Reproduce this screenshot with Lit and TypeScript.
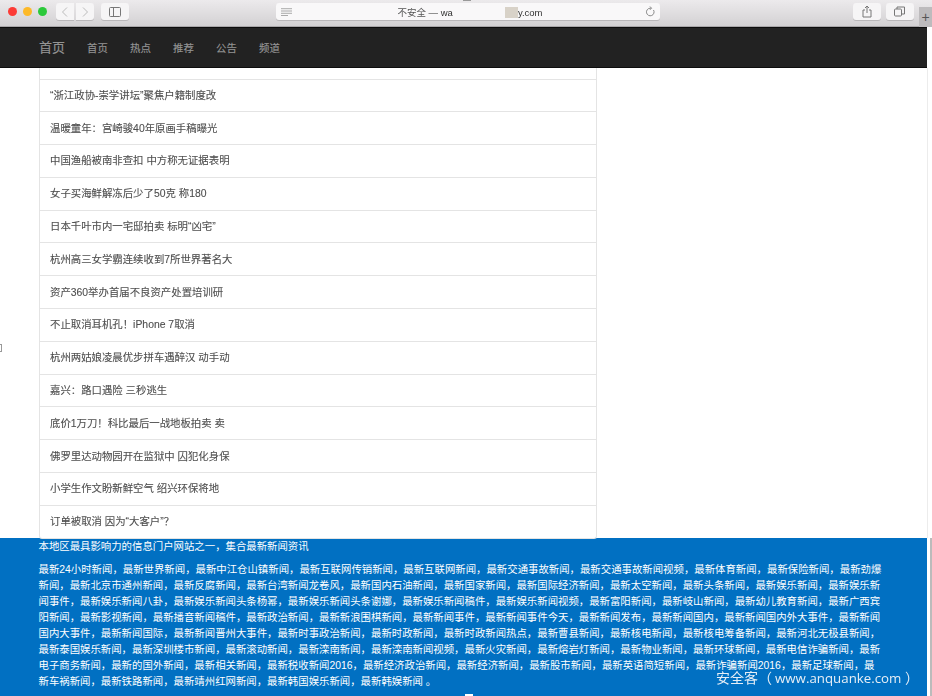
import { LitElement, html, css, svg } from "lit";
import { customElement } from "lit/decorators.js";

const NEWS = [
  "“浙江政协-崇学讲坛”聚焦户籍制度改",
  "温暖童年：宫崎骏40年原画手稿曝光",
  "中国渔船被南非查扣 中方称无证据表明",
  "女子买海鲜解冻后少了50克 称180",
  "日本千叶市内一宅邸拍卖 标明“凶宅”",
  "杭州高三女学霸连续收到7所世界著名大",
  "资产360举办首届不良资产处置培训研",
  "不止取消耳机孔！iPhone 7取消",
  "杭州两姑娘凌晨优步拼车遇醉汉 动手动",
  "嘉兴：路口遇险 三秒逃生",
  "底价1万刀！科比最后一战地板拍卖 卖",
  "佛罗里达动物园开在监狱中 囚犯化身保",
  "小学生作文盼新鲜空气 绍兴环保将地",
  "订单被取消 因为“大客户”？",
];
const NAV = ["首页", "热点", "推荐", "公告", "频道"];
const LINES = [
  "最新24小时新闻，最新世界新闻，最新中江仓山镇新闻，最新互联网传销新闻，最新互联网新闻，最新交通事故新闻，最新交通事故新闻视频，最新体育新闻，最新保险新闻，最新劲爆",
  "新闻，最新北京市通州新闻，最新反腐新闻，最新台湾新闻龙卷风，最新国内石油新闻，最新国家新闻，最新国际经济新闻，最新太空新闻，最新头条新闻，最新娱乐新闻，最新娱乐新",
  "闻事件，最新娱乐新闻八卦，最新娱乐新闻头条杨幂，最新娱乐新闻头条谢娜，最新娱乐新闻稿件，最新娱乐新闻视频，最新富阳新闻，最新岐山新闻，最新幼儿教育新闻，最新广西宾",
  "阳新闻，最新影视新闻，最新播音新闻稿件，最新政治新闻，最新新浪围棋新闻，最新新闻事件，最新新闻事件今天，最新新闻发布，最新新闻国内，最新新闻国内外大事件，最新新闻",
  "国内大事件，最新新闻国际，最新新闻晋州大事件，最新时事政治新闻，最新时政新闻，最新时政新闻热点，最新曹县新闻，最新核电新闻，最新核电筹备新闻，最新河北无极县新闻，",
  "最新泰国娱乐新闻，最新深圳楼市新闻，最新滚动新闻，最新滦南新闻，最新滦南新闻视频，最新火灾新闻，最新熔岩灯新闻，最新物业新闻，最新环球新闻，最新电信诈骗新闻，最新",
  "电子商务新闻，最新的国外新闻，最新相关新闻，最新税收新闻2016，最新经济政治新闻，最新经济新闻，最新股市新闻，最新英语简短新闻，最新诈骗新闻2016，最新足球新闻，最",
  "新车祸新闻，最新铁路新闻，最新靖州红网新闻，最新韩国娱乐新闻，最新韩娱新闻 。",
];

const icon = (w: number, h: number, body: unknown) =>
  html`<svg width=${w} height=${h} viewBox="0 0 ${w} ${h}" fill="none" stroke="#777" stroke-width="1">${body}</svg>`;

@customElement("app-root")
export class AppRoot extends LitElement {
  static styles = css`
    :host {
      display: block;
      width: 932px;
      height: 696px;
      overflow: hidden;
      position: relative;
      background: #fff;
      font-family: "Liberation Sans", "Noto Sans CJK SC", sans-serif;
    }
    .page { display: flex; flex-direction: column; height: 696px; filter: blur(0.35px); }
    .toolbar {
      height: 27px;
      flex: none;
      display: flex;
      align-items: center;
      padding: 0 0 3px 7.500px;
      box-sizing: border-box;
      background: linear-gradient(#eceaec, #d3d1d3);
      border-bottom: 1px solid #a9a7a9;
      position: relative;
    }
    .light { width: 9.500px; height: 9.500px; border-radius: 50%; margin-right: 5.500px; flex: none; }
    .red { background: #fc3b36; }
    .yellow { background: #fdb928; }
    .green { background: #2bc93a; }
    .btn {
      height: 17.500px;
      flex: none;
      display: flex;
      align-items: center;
      justify-content: center;
      background: #f6f5f6;
      border-radius: 3px;
      box-shadow: 0 1px 0 #b9b7b9;
    }
    .back { width: 18px; margin-left: 3.500px; border-radius: 3px 0 0 3px; }
    .fwd { width: 18px; margin-left: 1.500px; border-radius: 0 3px 3px 0; }
    .side { width: 28px; margin-left: 7px; }
    .url {
      width: 384px;
      flex: none;
      height: 17.500px;
      margin-left: 147px;
      padding: 0 5px 0 5px;
      box-sizing: border-box;
      border-radius: 3px;
      background: #f9f8f9;
      box-shadow: 0 1px 0 #b9b7b9;
      display: flex;
      align-items: center;
      gap: 4px;
    }
    .addr {
      flex: 1;
      font-size: 9.500px;
      color: #333;
      white-space: nowrap;
      display: flex;
      justify-content: center;
      align-items: center;
      padding: 1px 0 0 4px;
    }
    .muted { color: #555; white-space: pre; }
    .gap { width: 65px; height: 11px; background: linear-gradient(90deg, #f9f8f9 80%, #d8d2c8 80%); }
    .share { width: 28px; margin-left: 193px; }
    .tabs { width: 28px; margin-left: 5px; }
    .newtab {
      position: absolute;
      left: 919px;
      top: 7px;
      width: 13px;
      height: 20px;
      background: #bdbbbd;
      color: #555;
      font-size: 14px;
      line-height: 20px;
      text-align: center;
    }
    .notch {
      position: absolute;
      left: 463px;
      top: 0;
      width: 8px;
      height: 1px;
      background: #999;
    }
    .nav {
      height: 41px;
      flex: none;
      box-sizing: border-box;
      background: #222;
      border-top: 1px solid #0d0d0d;
      border-bottom: 1px solid #0d0d0d;
      display: flex;
      align-items: center;
      padding: 0 0 1px 39px;
      margin-right: 5px;
      color: #949494;
    }
    .brand { font-size: 13px; width: 48px; -webkit-text-stroke: 0.15px #949494; padding-bottom: 2px; }
    .item { font-size: 10.400px; width: 43px; -webkit-text-stroke: 0.15px #949494; }
    .content { flex: 1; min-height: 0; padding-left: 39px; display: flex; flex-direction: column; position: relative; }
    .list {
      width: 558px;
      flex: 1;
      box-sizing: border-box;
      border-left: 1px solid #e4e4e4;
      border-right: 1px solid #e4e4e4;
      border-bottom: 1px solid #e4e4e4;
      border-radius: 0 0 3px 3px;
      padding-top: 10.500px;
      display: flex;
      flex-direction: column;
      color: #4d4d4d;
      font-size: 10.400px;
      -webkit-text-stroke: 0.1px #4d4d4d;
    }
    .row {
      height: 32.800px;
      flex: none;
      box-sizing: border-box;
      border-top: 1px solid #e4e4e4;
      display: flex;
      align-items: center;
      padding: 0 0 2px 10px;
      white-space: nowrap;
    }
    .rule {
      position: absolute;
      left: 927px;
      top: 0;
      bottom: 0;
      width: 1px;
      background: #ececec;
    }
    .foot {
      height: 158px;
      flex: none;
      margin-right: 5px;
      background: #0170c2;
      color: #fff;
      padding: 1px 0 0 38.500px;
      box-sizing: border-box;
      font-size: 10.400px;
    }
    .lead { height: 16px; line-height: 16px; }
    .lines { margin-top: 7px; }
    .line { height: 16px; line-height: 16px; white-space: nowrap; }
    .mark {
      position: absolute;
      left: 716px;
      bottom: 9px;
      color: #e6eef6;
      font-size: 14px;
      font-family: "Open Sans", "Noto Sans CJK SC", sans-serif;
      white-space: nowrap;
    }
    .site { font-size: 13.300px; margin-left: 3px; }
    .tick {
      position: absolute;
      left: 0;
      top: 344px;
      width: 1px;
      height: 6px;
      border: 1px solid #999;
      border-left: 0;
    }
    .edge {
      position: absolute;
      left: 930px;
      top: 538px;
      width: 2px;
      height: 158px;
      background: #bbb;
    }
    .spot {
      position: absolute;
      left: 465px;
      top: 694px;
      width: 8px;
      height: 2px;
      background: #fff;
    }
  `;

  render() {
    return html`<div class="page">
      <div class="toolbar">
        <span class="light red"></span><span class="light yellow"></span><span class="light green"></span>
        <span class="btn back">${icon(8, 12, svg`<path d="M6 1.500 1.500 6 6 10.500" stroke="#bbb"/>`)}</span>
        <span class="btn fwd">${icon(8, 12, svg`<path d="M2 1.500 6.500 6 2 10.500" stroke="#bbb"/>`)}</span>
        <span class="btn side">${icon(12, 10, svg`<rect x=".5" y=".5" width="11" height="9" rx="1"/><path d="M4.500 .5v9"/>`)}</span>
        <div class="url">
          ${icon(11, 8, svg`<path d="M0 .7h11M0 3h11M0 5.300h11M0 7.500h7" stroke="#888" stroke-width=".7"/>`)}
          <span class="addr"><span class="muted">不安全 — </span>wa<span class="gap"></span>y.com</span>
          ${icon(10, 11, svg`<path d="M8.500 4A3.800 3.800 0 1 1 5 2.200h1M5 .5l1.600 1.700L5 3.800" stroke="#888"/>`)}
        </div>
        <span class="btn share">${icon(10, 13, svg`<path d="M3 5H1v7h8V5H7M5 8V1M3 3l2-2 2 2"/>`)}</span>
        <span class="btn tabs">${icon(11, 11, svg`<rect x=".5" y="3" width="7" height="7" rx="1"/><path d="M3 3V1h7.500v7H7.500"/>`)}</span>
        <span class="newtab">+</span>
        <span class="notch"></span>
      </div>
      <div class="nav">
        <span class="brand">首页</span>
        ${NAV.map((n) => html`<span class="item">${n}</span>`)}
      </div>
      <div class="content">
        <div class="list">${NEWS.map((n) => html`<div class="row">${n}</div>`)}</div>
        <span class="rule"></span>
      </div>
      <div class="foot">
        <div class="lead">本地区最具影响力的信息门户网站之一，集合最新新闻资讯</div>
        <div class="lines">${LINES.map((l) => html`<div class="line">${l}</div>`)}</div>
      </div>
    </div>
    <span class="tick"></span>
    <span class="edge"></span>
    <span class="spot"></span>
    <span class="mark">安全客（<span class="site">www.anquanke.com</span> ）</span>`;
  }
}
